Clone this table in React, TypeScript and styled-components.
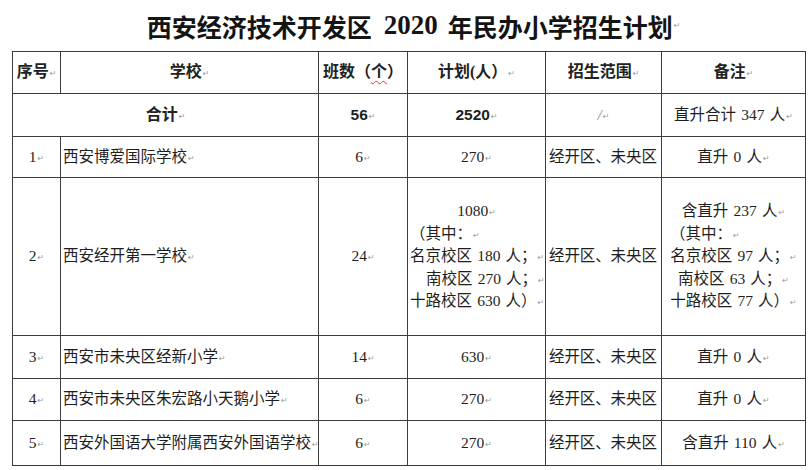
import React from "react"
import styled, { createGlobalStyle } from "styled-components"

const GlobalStyle = createGlobalStyle`
  html, body {
    margin: 0;
    padding: 0;
    background: #ffffff;
  }
`

// widths of the six columns, borders included
const COLS = [48, 258, 89, 138, 116, 144]

const BODY_FONT = `"Liberation Serif", "Noto Sans CJK SC", serif`
const SANS_FONT = `"Liberation Sans", "Noto Sans CJK SC", sans-serif`
const SP = "\u2004" // narrow space between number and unit

type Line = { t: string; align?: "left" | "center"; indent?: number }

type Row = {
  no: string
  name: string
  classes: string
  plan: Line[]
  range: string
  note: Line[]
  h: number
}

const rows: Row[] = [
  {
    no: "1",
    name: "西安博爱国际学校",
    classes: "6",
    plan: [{ t: "270" }],
    range: "经开区、未央区",
    note: [{ t: `直升${SP}0${SP}人` }],
    h: 41,
  },
  {
    no: "2",
    name: "西安经开第一学校",
    classes: "24",
    plan: [
      { t: "1080" },
      { t: "（其中：", align: "left" },
      { t: `名京校区${SP}180${SP}人；`, align: "left" },
      { t: `南校区${SP}270${SP}人；`, align: "left", indent: 16 },
      { t: `十路校区${SP}630${SP}人）`, align: "left" },
    ],
    range: "经开区、未央区",
    note: [
      { t: `含直升${SP}237${SP}人` },
      { t: "（其中：", align: "left", indent: 6 },
      { t: `名京校区${SP}97${SP}人；` },
      { t: `南校区${SP}63${SP}人；` },
      { t: `十路校区${SP}77${SP}人）` },
    ],
    h: 158,
  },
  {
    no: "3",
    name: "西安市未央区经新小学",
    classes: "14",
    plan: [{ t: "630" }],
    range: "经开区、未央区",
    note: [{ t: `直升${SP}0${SP}人` }],
    h: 43,
  },
  {
    no: "4",
    name: "西安市未央区朱宏路小天鹅小学",
    classes: "6",
    plan: [{ t: "270" }],
    range: "经开区、未央区",
    note: [{ t: `直升${SP}0${SP}人` }],
    h: 42,
  },
  {
    no: "5",
    name: "西安外国语大学附属西安外国语学校",
    classes: "6",
    plan: [{ t: "270" }],
    range: "经开区、未央区",
    note: [{ t: `含直升${SP}110${SP}人` }],
    h: 45,
  },
]

// Word paragraph mark
const Mark = () => <ParaMark>↵</ParaMark>

const App = () => {
  return (
    <Page>
      <GlobalStyle />
      <Title>
        西安经济技术开发区<TitleYear>2020</TitleYear>年民办小学招生计划
        <Mark />
      </Title>
      <TableWrap>
        <Table>
          <colgroup>
            {COLS.map((w, i) => (
              <col key={i} style={{ width: w }} />
            ))}
          </colgroup>
          <tbody>
            <tr style={{ height: 42 }}>
              <HeadCell>
                序号
                <Mark />
              </HeadCell>
              <HeadCell>
                学校
                <Mark />
              </HeadCell>
              <HeadCell>
                班数（<Squiggle>个</Squiggle>）
              </HeadCell>
              <HeadCell>
                计划(人）
                <Mark />
              </HeadCell>
              <HeadCell>
                招生范围
                <Mark />
              </HeadCell>
              <HeadCell>
                备注
                <Mark />
              </HeadCell>
            </tr>
            <tr style={{ height: 43 }}>
              <HeadCell colSpan={2}>
                合计
                <Mark />
              </HeadCell>
              <TotalCell>
                56
                <Mark />
              </TotalCell>
              <TotalCell>
                2520
                <Mark />
              </TotalCell>
              <Cell>
                <Slash>/</Slash>
                <Mark />
              </Cell>
              <Cell>
                直升合计{SP}347{SP}人
                <Mark />
              </Cell>
            </tr>
            {rows.map(r => (
              <tr key={r.no} style={{ height: r.h }}>
                <Cell>
                  {r.no}
                  <Mark />
                </Cell>
                <Cell $align="left">
                  {r.name}
                  <Mark />
                </Cell>
                <Cell>
                  {r.classes}
                  <Mark />
                </Cell>
                <Cell>
                  {r.plan.map((l, i) => (
                    <CellLine key={i} $align={l.align || "center"} $indent={l.indent || 0}>
                      {l.t}
                      <Mark />
                    </CellLine>
                  ))}
                </Cell>
                <RangeCell>{r.range}</RangeCell>
                <Cell>
                  {r.note.map((l, i) => (
                    <CellLine key={i} $align={l.align || "center"} $indent={l.indent || 0}>
                      {l.t}
                      <Mark />
                    </CellLine>
                  ))}
                </Cell>
              </tr>
            ))}
          </tbody>
        </Table>
      </TableWrap>
    </Page>
  )
}

const Page = styled.div`
  width: 812px;
  height: 470px;
  overflow: hidden;
  background: #ffffff;
  color: #1c1c1c;
`

const Title = styled.h1`
  margin: 0;
  height: 51px;
  display: flex;
  align-items: center;
  justify-content: center;
  padding-left: 15px;
  font-family: ${BODY_FONT};
  font-size: 25px;
  font-weight: 700;
  color: #141414;
  white-space: nowrap;
`

const TitleYear = styled.span`
  font-size: 27px;
  margin: 0 10px 0 12px;
`

const TableWrap = styled.div`
  padding-left: 12px;
`

const Table = styled.table`
  border-collapse: collapse;
  table-layout: fixed;
  width: 793px;
`

const Cell = styled.td<{ $align?: "left" | "center" }>`
  border: 1px solid #3c3c3c;
  padding: 0 2px;
  vertical-align: middle;
  text-align: ${p => p.$align || "center"};
  font-family: ${BODY_FONT};
  font-size: 15.5px;
  line-height: 22.5px;
  color: #1e1e1e;
  white-space: nowrap;
`

const RangeCell = styled(Cell)`
  text-align: left;
  padding: 0 1px 0 3px;
  letter-spacing: -0.1px;
`

const HeadCell = styled(Cell)`
  font-size: 16px;
  font-weight: 700;
  color: #222222;
`

const TotalCell = styled(Cell)`
  font-family: ${SANS_FONT};
  font-size: 15.5px;
  font-weight: 700;
`

const CellLine = styled.div<{ $align: "left" | "center"; $indent: number }>`
  height: 22.5px;
  line-height: 22.5px;
  text-align: ${p => p.$align};
  padding-left: ${p => p.$indent}px;
`

const ParaMark = styled.span`
  font-family: "DejaVu Sans", sans-serif;
  font-size: 8px;
  line-height: 1;
  font-weight: 400;
  color: #9a9a9a;
  margin-left: 1px;
  vertical-align: 1px;
`

const Squiggle = styled.span`
  text-decoration: underline wavy #e03030;
  text-decoration-thickness: 1px;
  text-underline-offset: 3px;
`

const Slash = styled.span`
  color: #8a8a8a;
  font-style: italic;
`

export default App
